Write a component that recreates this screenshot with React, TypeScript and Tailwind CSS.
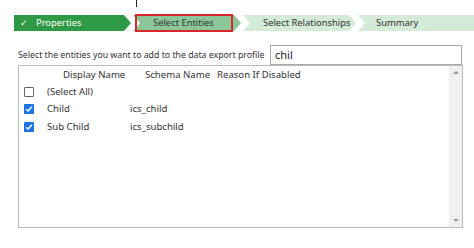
import React from "react";

const font = { fontFamily: '"Segoe UI", "Noto Sans", "Open Sans", sans-serif' };

function Check({ checked }: { checked: boolean }) {
  return checked ? (
    <div className="w-[10px] h-[10px] bg-[#1a73e8] rounded-[1px] flex items-center justify-center">
      <svg width="8" height="8" viewBox="0 0 8 8">
        <path d="M1.2 4.2 L3.2 6 L6.8 1.8" stroke="white" strokeWidth="1.5" fill="none" />
      </svg>
    </div>
  ) : (
    <div className="w-[10px] h-[10px] border border-[#666] rounded-[1px] bg-white" />
  );
}

export default function App() {
  return (
    <div className="w-[474px] h-[248px] bg-white relative overflow-hidden" style={font}>
      <div className="absolute left-[136px] top-0 w-px h-[7px] bg-[#222]" />
      <div className="pt-[15px] pl-[14px] flex h-[32px] whitespace-nowrap">
        <div className="w-[117px] h-[16px] bg-[#2f9a45] text-white text-[9.4px] flex items-center pl-[6px] gap-[8px] [clip-path:polygon(0_0,calc(100%-7px)_0,100%_50%,calc(100%-7px)_100%,0_100%)]">
          <span className="text-[9px]">✓</span>
          <span>Properties</span>
        </div>
        <div className="relative ml-[2px] w-[108px] h-[16px]">
          <div className="w-full h-full bg-[#8cc79a] text-[#333] text-[9.4px] flex items-center pl-[20px] [clip-path:polygon(0_0,calc(100%-7px)_0,100%_50%,calc(100%-7px)_100%,0_100%,7px_50%)]">
            Select Entities
          </div>
          <div className="absolute left-[2px] top-[-1px] w-[98px] h-[18px] border-2 border-[#d8262d]" />
        </div>
        <div className="ml-[2px] w-[113px] h-[16px] bg-[#d4ebd8] text-[#333] text-[9.4px] flex items-center pl-[20px] [clip-path:polygon(0_0,calc(100%-7px)_0,100%_50%,calc(100%-7px)_100%,0_100%,7px_50%)]">
          Select Relationships
        </div>
        <div className="ml-[2px] flex-1 h-[16px] bg-[#d4ebd8] text-[#333] text-[9.4px] flex items-center pl-[18px] [clip-path:polygon(0_0,100%_0,100%_100%,0_100%,7px_50%)]">
          Summary
        </div>
      </div>
      <div className="flex items-end justify-between pl-[18px] pr-[12px] mt-[13px]">
        <div className="text-[8.75px] text-[#333] pb-[3px] whitespace-nowrap">
          Select the entities you want to add to the data export profile
        </div>
        <div className="w-[192px] h-[20px] border border-[#aaa] text-[11px] text-[#222] pl-[4px] flex items-center">
          chil
        </div>
      </div>
      <div className="ml-[18px] w-[445px] h-[163px] border border-[#bbb] flex">
        <div className="flex-1 text-[9.6px] text-[#333] whitespace-nowrap">
          <div className="flex h-[17px] items-center pt-[2px]">
            <div className="w-[44px]" />
            <div className="w-[82px]">Display Name</div>
            <div className="w-[72px]">Schema Name</div>
            <div>Reason If Disabled</div>
          </div>
          {[
            { c: false, n: "(Select All)", s: "" },
            { c: true, n: "Child", s: "ics_child" },
            { c: true, n: "Sub Child", s: "ics_subchild" },
          ].map((r) => (
            <div key={r.n} className="flex h-[17.5px] items-center">
              <div className="w-[28px] pl-[5px]">
                <Check checked={r.c} />
              </div>
              <div className="w-[83px]">{r.n}</div>
              <div>{r.s}</div>
            </div>
          ))}
        </div>
        <div className="w-[13px] bg-[#f0f0f0] flex flex-col justify-between items-center py-[4px]">
          <svg width="6" height="4" viewBox="0 0 6 4"><path d="M0 4 L3 1 L6 4 Z" fill="#999" /></svg>
          <svg width="6" height="4" viewBox="0 0 6 4"><path d="M0 0 L3 3 L6 0 Z" fill="#999" /></svg>
        </div>
      </div>
    </div>
  );
}
